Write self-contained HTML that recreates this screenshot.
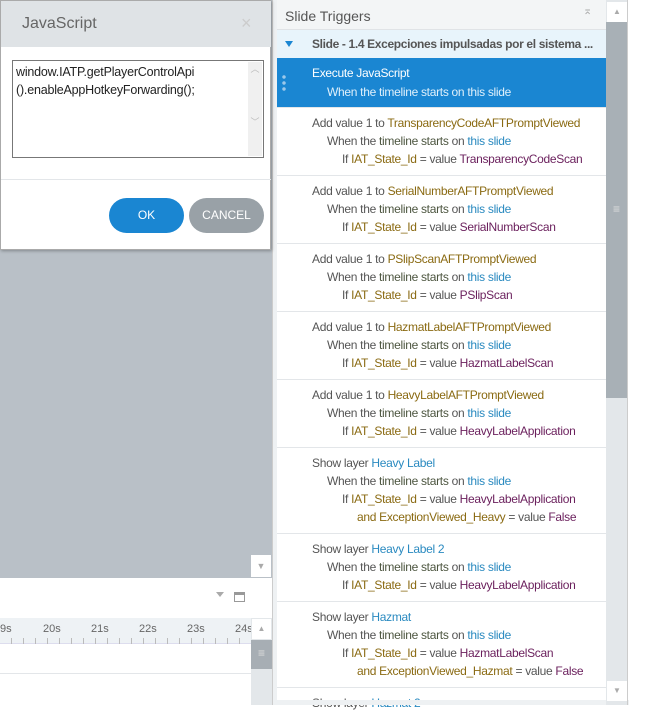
<!DOCTYPE html>
<html><head><meta charset="utf-8"><style>
*{margin:0;padding:0;box-sizing:border-box}
body{width:656px;height:705px;position:relative;overflow:hidden;background:#fff;font-family:"Liberation Sans",sans-serif;font-size:12px;color:#555}
.abs{position:absolute}
.g{color:#555}.o{color:#8a6a12}.p{color:#6a1f5c}.b{color:#2a8ac0}.d{color:#4d5640}
.item{position:absolute;left:277px;width:329px;border-top:1px solid #e3e6e9;background:#fff}
.item div{position:absolute;white-space:nowrap;letter-spacing:-0.3px}
.l1{left:35px;top:8px}.l2{left:50px;top:26px}.l3{left:65px;top:44px}.l4{left:80px;top:62px}
</style></head><body>
<div class="abs" style="left:0;top:0;width:272px;height:578px;background:#b9c0c7"></div>
<div class="abs" style="left:251px;top:555px;width:20px;height:22px;background:#fff;color:#aaa;font-size:9px;text-align:center;line-height:22px">▼</div>
<div class="abs" style="left:0;top:578px;width:272px;height:40px;background:#fff"></div>
<div class="abs" style="left:216px;top:592px;width:0;height:0;border-left:4px solid transparent;border-right:4px solid transparent;border-top:5px solid #aaa"></div>
<div class="abs" style="left:234px;top:592px;width:11px;height:10px;border:1px solid #999;border-top-width:3px"></div>
<div class="abs" style="left:0;top:618px;width:251px;height:26px;background:#eef2f5;border-bottom:1px solid #dde"></div>
<div class="abs" style="left:0;top:623px;font-size:11px;color:#666">9s</div>
<div class="abs" style="left:43px;top:623px;font-size:11px;color:#666">20s</div>
<div class="abs" style="left:91px;top:623px;font-size:11px;color:#666">21s</div>
<div class="abs" style="left:139px;top:623px;font-size:11px;color:#666">22s</div>
<div class="abs" style="left:187px;top:623px;font-size:11px;color:#666">23s</div>
<div class="abs" style="left:235px;top:623px;font-size:11px;color:#666">24s</div>
<div class="abs" style="left:0;top:638px;width:251px;height:6px;background:repeating-linear-gradient(90deg,transparent 0,transparent 11px,#bbb 11px,#bbb 12px)"></div>
<div class="abs" style="left:0;top:673px;width:251px;height:1px;background:#e3e6e9"></div>
<div class="abs" style="left:251px;top:618px;width:21px;height:87px;background:#e3e7ea"></div>
<div class="abs" style="left:252px;top:619px;width:19px;height:20px;background:#fff;color:#aaa;font-size:8px;text-align:center;line-height:20px">▲</div>
<div class="abs" style="left:251px;top:640px;width:21px;height:29px;background:#a7aeb4;color:#ddd;text-align:center;line-height:26px;font-size:12px">≡</div>
<div class="abs" style="left:272px;top:0;width:5px;height:705px;background:#eef1f3;border-left:1px solid #ccc"></div>
<div class="abs" style="left:0;top:0;width:271px;height:250px;background:#fff;border:1px solid #aaa;box-shadow:1px 1px 3px rgba(0,0,0,.3)">
 <div class="abs" style="left:0;top:0;width:270px;height:46px;background:#dfe3e6"></div>
 <div class="abs" style="left:21px;top:14px;font-size:16px;color:#666">JavaScript</div>
 <div class="abs" style="left:240px;top:12px;font-size:18px;color:#ccc">×</div>
 <div class="abs" style="left:11px;top:59px;width:252px;height:98px;border:1px solid #777;background:#fff">
  <div class="abs" style="left:3px;top:2px;color:#222;font-size:12.5px;line-height:18px;letter-spacing:-0.2px">window.IATP.getPlayerControlApi<br>().enableAppHotkeyForwarding();</div>
  <div class="abs" style="right:1px;top:1px;width:14px;height:94px;background:#f0f0f0;color:#bbb;font-size:9px;text-align:center">︿<br><br><br><br><br>﹀</div>
 </div>
 <div class="abs" style="left:0;top:178px;width:270px;height:1px;background:#e3e6e9"></div>
 <div class="abs" style="left:108px;top:197px;width:75px;height:35px;border-radius:18px;background:#1a86d2;color:#fff;font-size:12px;text-align:center;line-height:35px">OK</div>
 <div class="abs" style="left:188px;top:197px;width:75px;height:35px;border-radius:18px;background:#99a1a7;color:#fff;font-size:12px;text-align:center;line-height:35px">CANCEL</div>
</div>
<div class="abs" style="left:277px;top:0;width:329px;height:30px;background:#f3f5f6;border-bottom:1px solid #e0e3e6"></div>
<div class="abs" style="left:285px;top:8px;font-size:14px;color:#555">Slide Triggers</div>
<div class="abs" style="left:583px;top:7px;color:#aaa;font-size:11px;line-height:8px">⌅</div>
<div class="abs" style="left:277px;top:30px;width:329px;height:28px;background:#e8f4fb"></div>
<div class="abs" style="left:285px;top:41px;width:0;height:0;border-left:4px solid transparent;border-right:4px solid transparent;border-top:6px solid #1a86d2"></div>
<div class="abs" style="left:312px;top:37px;font-weight:bold;color:#555;letter-spacing:-0.35px;white-space:nowrap">Slide - 1.4 Excepciones impulsadas por el sistema ...</div>
<div class="abs" style="left:277px;top:58px;width:329px;height:49px;background:#1a86d2"></div>
<div class="abs" style="left:282px;top:74px;width:4px;height:18px;background:radial-gradient(circle,#9cc8ea 1.5px,transparent 2px) 0 0/4px 6px"></div>
<div class="abs" style="left:312px;top:66px;color:#fff;letter-spacing:-0.3px">Execute JavaScript</div>
<div class="abs" style="left:327px;top:85px;color:#dff0fb;letter-spacing:-0.3px">When the timeline starts on this slide</div>

<div class="item" style="top:107px;height:69px"><div class="l1">Add value 1 to <span class="o">TransparencyCodeAFTPromptViewed</span></div><div class="l2">When the <span class="d">timeline starts</span> on <span class="b">this slide</span></div><div class="l3">If <span class="o">IAT_State_Id</span> = value <span class="p">TransparencyCodeScan</span></div></div>
<div class="item" style="top:175px;height:69px"><div class="l1">Add value 1 to <span class="o">SerialNumberAFTPromptViewed</span></div><div class="l2">When the <span class="d">timeline starts</span> on <span class="b">this slide</span></div><div class="l3">If <span class="o">IAT_State_Id</span> = value <span class="p">SerialNumberScan</span></div></div>
<div class="item" style="top:243px;height:69px"><div class="l1">Add value 1 to <span class="o">PSlipScanAFTPromptViewed</span></div><div class="l2">When the <span class="d">timeline starts</span> on <span class="b">this slide</span></div><div class="l3">If <span class="o">IAT_State_Id</span> = value <span class="p">PSlipScan</span></div></div>
<div class="item" style="top:311px;height:69px"><div class="l1">Add value 1 to <span class="o">HazmatLabelAFTPromptViewed</span></div><div class="l2">When the <span class="d">timeline starts</span> on <span class="b">this slide</span></div><div class="l3">If <span class="o">IAT_State_Id</span> = value <span class="p">HazmatLabelScan</span></div></div>
<div class="item" style="top:379px;height:69px"><div class="l1">Add value 1 to <span class="o">HeavyLabelAFTPromptViewed</span></div><div class="l2">When the <span class="d">timeline starts</span> on <span class="b">this slide</span></div><div class="l3">If <span class="o">IAT_State_Id</span> = value <span class="p">HeavyLabelApplication</span></div></div>
<div class="item" style="top:447px;height:87px"><div class="l1">Show layer <span class="b">Heavy Label</span></div><div class="l2">When the <span class="d">timeline starts</span> on <span class="b">this slide</span></div><div class="l3">If <span class="o">IAT_State_Id</span> = value <span class="p">HeavyLabelApplication</span></div><div class="l4"><span class="o">and ExceptionViewed_Heavy</span> = value <span class="p">False</span></div></div>
<div class="item" style="top:533px;height:69px"><div class="l1">Show layer <span class="b">Heavy Label 2</span></div><div class="l2">When the <span class="d">timeline starts</span> on <span class="b">this slide</span></div><div class="l3">If <span class="o">IAT_State_Id</span> = value <span class="p">HeavyLabelApplication</span></div></div>
<div class="item" style="top:601px;height:87px"><div class="l1">Show layer <span class="b">Hazmat</span></div><div class="l2">When the <span class="d">timeline starts</span> on <span class="b">this slide</span></div><div class="l3">If <span class="o">IAT_State_Id</span> = value <span class="p">HazmatLabelScan</span></div><div class="l4"><span class="o">and ExceptionViewed_Hazmat</span> = value <span class="p">False</span></div></div>
<div class="item" style="top:687px;height:18px"><div class="l1">Show layer <span class="b">Hazmat 2</span></div></div>
<div class="abs" style="left:277px;top:700px;width:352px;height:5px;background:#eef1f3"></div>
<div class="abs" style="left:606px;top:0;width:22px;height:705px;background:#e3e7ea;border-right:1px solid #ccc"></div>
<div class="abs" style="left:607px;top:2px;width:20px;height:20px;background:#fff;color:#aaa;font-size:8px;text-align:center;line-height:20px">▲</div>
<div class="abs" style="left:606px;top:22px;width:21px;height:376px;background:#a8b0b6"></div>
<div class="abs" style="left:606px;top:202px;width:21px;text-align:center;color:#ddd;font-size:12px">≡</div>
<div class="abs" style="left:607px;top:681px;width:20px;height:20px;background:#fff;color:#aaa;font-size:8px;text-align:center;line-height:20px">▼</div>
</body></html>
